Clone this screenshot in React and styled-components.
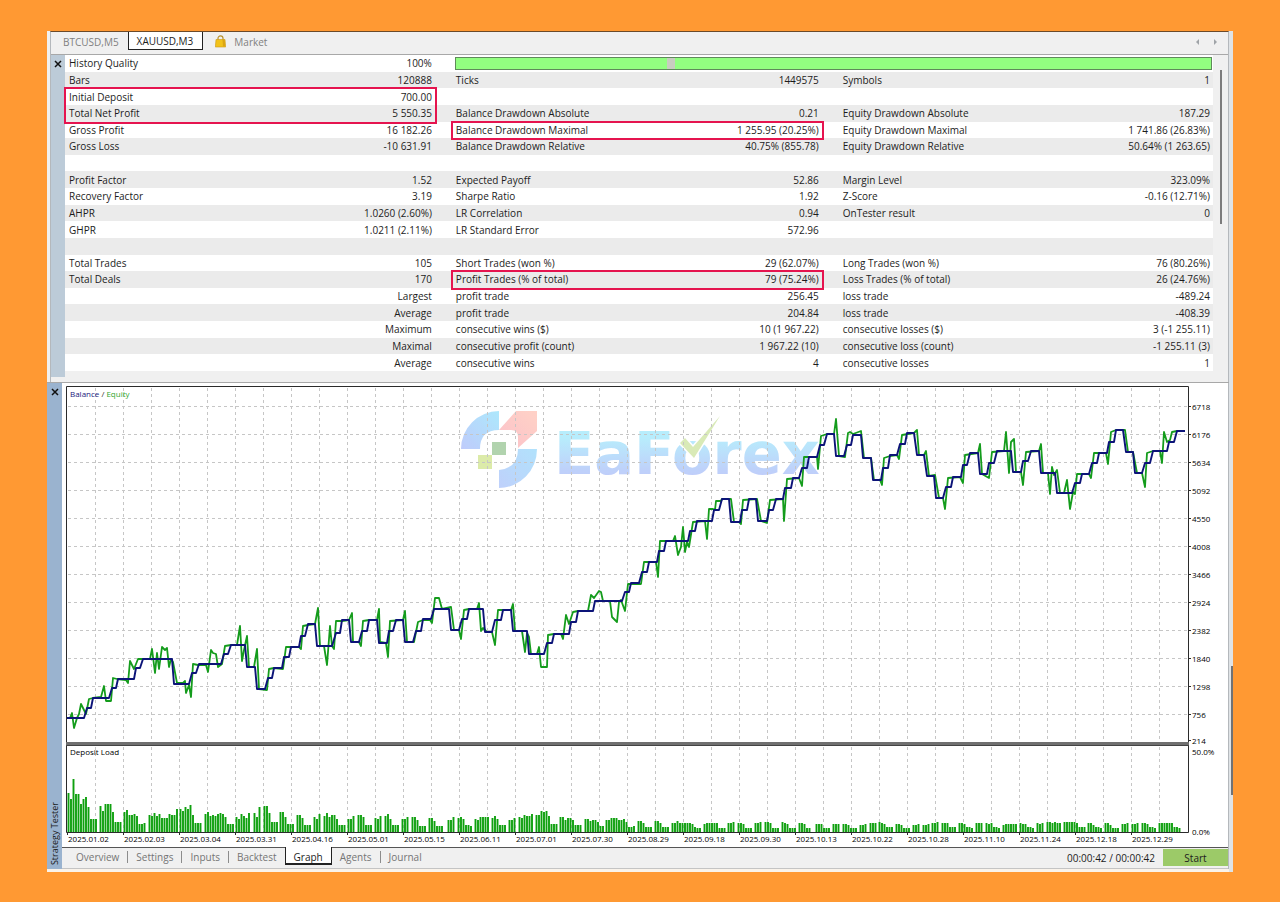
import styled, { createGlobalStyle, css } from 'styled-components'

const GlobalStyle = createGlobalStyle`
  * {
    box-sizing: border-box;
  }
  body {
    margin: 0;
    background: #ff9933;
    color: #1c1c1c;
    font-family: 'Open Sans', 'Noto Sans', sans-serif;
    font-size: 10px;
    line-height: 16px;
  }
  button {
    font: inherit;
    color: inherit;
    margin: 0;
    border: 0;
    cursor: pointer;
  }
`

const Page = styled.div`
  min-height: 100vh;
  padding: 31px 47px 30px;
`

const Window = styled.main`
  display: flex;
  flex-direction: column;
  background: #f0f0f0;
  border-right: 4px solid #dfe3e6;
  position: relative;
`

const TopPane = styled.section`
  margin-left: 3px;
  border-left: 1px solid #b4b8bc;
  border-top: 1px solid #6b4a2a;
  border-right: 1px solid #b4b8bc;
`

const SymbolTabs = styled.nav`
  display: flex;
  align-items: flex-start;
  height: 23px;
  border-bottom: 1px solid #a8a8a8;
`

const SymbolTab = styled.button`
  display: flex;
  align-items: center;
  gap: 8px;
  height: 19px;
  padding: 0 9px 0 12px;
  background: transparent;
  color: #808080;
  ${({ $active }) => $active && css`
    height: 18px;
    padding: 0 9px 0 8px;
    background: #fff;
    color: #1c1c1c;
    border: solid #222;
    border-width: 0 1px 1px;
  `}
`

const TabArrows = styled.div`
  display: flex;
  gap: 13px;
  margin-left: auto;
  padding: 7px 10px 0 0;
`

const StatsBody = styled.div`
  display: flex;
  padding-bottom: 11px;
`

const StatsBar = styled.div`
  width: 14px;
  margin-bottom: -6px;
  background: #bccbd8;
  display: flex;
  justify-content: center;
  padding-top: 1px;
`

const CloseButton = styled.button`
  width: 14px;
  height: 16px;
  padding: 0;
  background: transparent;
  display: flex;
  align-items: center;
  justify-content: center;
`

const StatsArea = styled.div`
  position: relative;
  flex: 1;
  background: #fff;
`

const StatsTable = styled.table`
  width: 100%;
  height: 316px;
  table-layout: fixed;
  border-collapse: collapse;
  tr {
    height: 16px;
  }
  tr:nth-child(even) {
    background: #ebebeb;
  }
`

const Label = styled.td`
  padding: 0 0 0 4px;
  white-space: nowrap;
`

const Value = styled.td`
  padding: 0 ${({ $last }) => $last ? '3px' : '20px'} 0 0;
  text-align: right;
  white-space: nowrap;
`

const QualityCell = styled.td`
  padding: 0 1px 0 3px;
`

const QualityBar = styled.div`
  height: 13px;
  border: 1px solid #5f8a5a;
  background: linear-gradient(90deg, #92ff80 0 28%, #c8ccc0 28% 29%, #92ff80 29%);
`

const Highlight = styled.div`
  position: absolute;
  left: ${({ $group }) => `calc(${$group * 33.7}% - 1px)`};
  top: ${({ $row }) => `calc(${($row * 100) / 19}% - 1px)`};
  width: calc(33.7% - 14px);
  height: ${({ $rows }) => `calc(${($rows * 100) / 19}% + 3px)`};
  border: 2px solid #e5144f;
  pointer-events: none;
`

const StatsScroll = styled.div`
  width: 15px;
  display: flex;
  justify-content: center;
  padding-top: 15px;
`

const ScrollThumb = styled.div`
  width: 2px;
  height: 154px;
  background: #7c7c7c;
`

const TesterPane = styled.section`
  display: flex;
  border-top: 1px solid #a8a8a8;
  border-bottom: 3px solid #faf3ea;
`

const TesterBar = styled.div`
  width: 15px;
  background: #9ab3cf;
  display: flex;
  flex-direction: column;
  justify-content: space-between;
  align-items: center;
  padding: 1px 0 4px;
`

const PaneName = styled.span`
  writing-mode: vertical-rl;
  transform: rotate(180deg);
  font-size: 9px;
  line-height: 15px;
`

const TesterContent = styled.div`
  flex: 1;
  min-width: 0;
  display: flex;
  flex-direction: column;
  border-right: 1px solid #b4b8bc;
`

const Chart = styled.svg`
  display: block;
  width: 100%;
  background: #fff;
  font-size: 8px;
`

const Footer = styled.footer`
  display: flex;
  justify-content: space-between;
  align-items: flex-start;
  height: 22px;
  border-top: 1px solid #555;
  border-bottom: 1px solid #c4c4c4;
`

const PaneTabs = styled.nav`
  display: flex;
  align-items: flex-start;
  padding-left: 6px;
`

const PaneTab = styled.button`
  height: 17px;
  padding: 0 8px;
  background: transparent;
  color: #757575;
  ${({ $active }) => $active && css`
    height: 18px;
    margin-top: -1px;
    padding-top: 2px;
    background: #fff;
    color: #1c1c1c;
    border: solid #222;
    border-width: 0 1px 2px;
  `}
`

const Divider = styled.span`
  width: 1px;
  height: 12px;
  margin-top: 3px;
  background: #8c8c8c;
`

const Controls = styled.div`
  display: flex;
  align-items: center;
  gap: 8px;
  padding-top: 1px;
`

const StartButton = styled.button`
  width: 65px;
  height: 17px;
  padding: 0;
  background: #9cca68;
`

const PageThumb = styled.div`
  position: absolute;
  right: -4px;
  top: 75.5%;
  width: 2px;
  height: 15.4%;
  background: #6f7276;
`

const stats = [
  ['Bars', '120888', 'Ticks', '1449575', 'Symbols', '1'],
  ['Initial Deposit', '700.00', '', '', '', ''],
  ['Total Net Profit', '5 550.35', 'Balance Drawdown Absolute', '0.21', 'Equity Drawdown Absolute', '187.29'],
  ['Gross Profit', '16 182.26', 'Balance Drawdown Maximal', '1 255.95 (20.25%)', 'Equity Drawdown Maximal', '1 741.86 (26.83%)'],
  ['Gross Loss', '-10 631.91', 'Balance Drawdown Relative', '40.75% (855.78)', 'Equity Drawdown Relative', '50.64% (1 263.65)'],
  ['', '', '', '', '', ''],
  ['Profit Factor', '1.52', 'Expected Payoff', '52.86', 'Margin Level', '323.09%'],
  ['Recovery Factor', '3.19', 'Sharpe Ratio', '1.92', 'Z-Score', '-0.16 (12.71%)'],
  ['AHPR', '1.0260 (2.60%)', 'LR Correlation', '0.94', 'OnTester result', '0'],
  ['GHPR', '1.0211 (2.11%)', 'LR Standard Error', '572.96', '', ''],
  ['', '', '', '', '', ''],
  ['Total Trades', '105', 'Short Trades (won %)', '29 (62.07%)', 'Long Trades (won %)', '76 (80.26%)'],
  ['Total Deals', '170', 'Profit Trades (% of total)', '79 (75.24%)', 'Loss Trades (% of total)', '26 (24.76%)'],
  ['', 'Largest', 'profit trade', '256.45', 'loss trade', '-489.24'],
  ['', 'Average', 'profit trade', '204.84', 'loss trade', '-408.39'],
  ['', 'Maximum', 'consecutive wins ($)', '10 (1 967.22)', 'consecutive losses ($)', '3 (-1 255.11)'],
  ['', 'Maximal', 'consecutive profit (count)', '1 967.22 (10)', 'consecutive loss (count)', '-1 255.11 (3)'],
  ['', 'Average', 'consecutive wins', '4', 'consecutive losses', '1'],
]

const levels = [
  ['6718', 410], ['6176', 438], ['5634', 466], ['5092', 494], ['4550', 522], ['4008', 550], ['3466', 578],
  ['2924', 606], ['2382', 634], ['1840', 662], ['1298', 690], ['756', 718], ['214', 744],
]

const dates = [
  '2025.01.02', '2025.02.03', '2025.03.04', '2025.03.31', '2025.04.16', '2025.05.01', '2025.05.15',
  '2025.06.11', '2025.07.01', '2025.07.30', '2025.08.29', '2025.09.18', '2025.09.30', '2025.10.13',
  '2025.10.22', '2025.10.28', '2025.11.10', '2025.11.24', '2025.12.18', '2025.12.29',
]

const balance = `67,718 84,718 87,708 91,708 93,698 109,698 112,688 116,688 118,679 134,679 136,668 140,668
143,659 172,659 174,684 189,684 192,673 196,673 199,664 221,664 224,654 228,654 231,645 245,645 247,667
255,667 257,689 265,689 268,678 272,678 274,668 282,668 284,657 289,657 291,647 299,647 301,636 305,636
308,624 315,624 317,646 332,646 336,633 340,633 342,620 349,620 351,642 359,642 362,631 367,631 369,620
377,620 379,643 387,643 389,631 393,631 396,620 403,620 405,642 413,642 416,631 421,631 423,619 431,619
434,609 449,609 451,630 459,630 462,619 467,619 469,609 483,609 485,632 492,632 495,620 501,620 503,610
511,610 513,631 527,631 529,654 544,654 547,643 552,643 554,634 569,634 571,622 576,622 578,611 593,611
595,601 622,601 625,592 629,592 631,583 639,583 642,572 647,572 649,562 657,562 659,551 664,551 666,541
688,541 690,531 695,531 697,521 712,521 714,510 719,510 722,499 729,499 731,522 740,522 742,510 747,510
749,499 756,499 758,521 767,521 769,510 773,510 776,499 783,499 785,488 791,488 793,478 799,478 802,468
807,468 809,457 817,457 820,445 824,445 827,434 834,434 836,456 844,456 847,445 851,445 853,435 861,435
863,458 871,458 873,480 881,480 883,468 888,468 890,455 897,455 900,444 905,444 907,433 914,433 917,455
924,455 927,476 934,476 936,498 943,498 946,487 951,487 953,477 961,477 963,465 967,465 970,453 978,453
980,474 987,474 989,463 994,463 997,451 1011,451 1013,472 1021,472 1023,461 1028,461 1031,451 1039,451
1041,473 1055,473 1057,493 1072,493 1075,483 1080,483 1082,474 1089,474 1092,463 1097,463 1099,453
1107,453 1109,442 1114,442 1116,430 1123,430 1126,452 1133,452 1135,473 1142,473 1145,463 1150,463
1153,451 1167,451 1169,442 1174,442 1177,431 1185,431`

const equity = `67,718 70,718 72,713 74,728 77,718 79,714 81,704 84,710 86,714 89,699 93,698 101,697 104,686
106,701 111,701 113,678 117,679 126,680 128,683 130,661 134,669 138,659 150,659 152,649 155,673 157,653
159,669 162,647 165,650 167,648 169,667 171,659 173,662 177,683 183,683 185,681 186,693 189,685 191,697
193,664 198,665 206,665 208,672 211,650 213,653 216,654 218,667 222,664 225,646 231,645 237,645 240,626
242,661 244,650 247,636 249,667 254,667 257,649 259,689 267,690 269,669 274,668 283,669 286,647 291,647
299,647 301,649 303,626 308,625 315,624 318,608 320,646 324,646 327,665 330,626 332,646 334,649 336,621
342,621 349,620 352,613 353,642 359,642 361,646 363,621 369,620 377,620 379,609 380,642 386,643 388,657
390,621 403,620 405,611 407,642 414,642 418,622 423,620 430,620 432,623 435,598 439,598 442,609 451,607
454,630 459,630 461,639 464,610 469,609 477,609 479,603 481,631 483,628 487,632 492,632 495,645 498,610
511,610 513,604 515,631 522,631 525,652 527,633 529,637 531,654 537,654 539,647 541,667 547,667 548,635
554,634 561,634 563,639 566,615 569,624 573,612 578,611 588,611 591,595 594,598 599,591 601,592 603,601
610,601 612,617 617,622 619,602 621,600 625,611 628,584 641,584 644,562 656,562 658,577 660,541 673,541
675,536 678,555 681,547 683,527 685,552 687,542 689,547 693,522 705,521 707,539 709,509 713,509 715,510
716,501 721,501 722,499 731,499 734,522 739,522 741,524 743,500 757,499 761,521 767,523 770,500 783,499
784,521 787,479 799,478 802,486 804,457 817,457 818,469 821,436 827,434 834,434 836,419 839,456 845,457
848,433 850,432 853,434 861,431 864,458 871,458 874,480 880,480 882,485 884,458 890,456 897,455 899,459
902,435 914,433 917,430 919,455 924,455 926,451 929,476 935,475 939,498 943,498 945,509 948,478 960,477
963,483 965,455 978,453 980,444 982,474 989,478 992,452 1004,451 1006,432 1009,473 1011,442 1014,439
1016,472 1021,472 1023,485 1026,452 1039,451 1041,444 1043,473 1048,473 1050,494 1052,467 1054,475
1057,470 1060,493 1064,493 1067,480 1070,509 1073,492 1075,494 1077,474 1089,474 1091,478 1094,453
1106,453 1108,464 1111,432 1116,430 1125,430 1128,452 1133,452 1137,473 1142,473 1145,487 1147,453
1153,451 1160,451 1162,463 1164,432 1167,442 1170,440 1172,432 1177,431 1185,431`

// each cluster: x of its first bar, then the bar heights
const loads = [
  [68, 39, 33, 53, 38, 38, 28, 33, 35, 25, 13, 13, 13],
  [100, 26, 21, 28, 28, 28, 20, 10, 10, 10],
  [124, 20, 22, 17, 17, 18, 16, 8, 8, 9],
  [149, 17, 16, 19, 16, 18, 14, 14, 14, 18, 17, 17, 23],
  [180, 23, 21, 25, 23, 27, 17, 9, 9, 9],
  [205, 18, 20, 16, 17, 16, 18, 19, 18, 15, 8, 8, 8],
  [236, 15, 13, 18, 16, 14, 19], [254, 19, 15, 25],
  [264, 26, 26, 19, 10, 10, 10], [280, 20, 20, 15, 8, 8, 8],
  [297, 17, 17, 14, 7, 7, 7], [314, 15, 13, 18],
  [324, 16, 19, 15, 17, 17, 13, 7, 7, 7], [348, 13, 13, 16],
  [358, 17, 17, 15, 7, 7, 7], [375, 14, 13, 16],
  [385, 16, 18, 13, 7, 7, 7], [402, 13, 13, 15],
  [412, 15, 15, 12, 6, 6, 6], [429, 14, 14, 11, 6, 6, 6], [448, 12, 12, 15],
  [458, 14, 15, 13, 7, 7, 6], [475, 13, 12, 15, 15, 15, 15],
  [492, 14, 16, 13, 7, 7, 7], [509, 12, 12, 14],
  [519, 15, 14, 17, 16, 16, 18], [536, 17, 17, 21, 20, 21, 16, 8, 8, 8],
  [560, 15, 15, 12, 14, 14, 12, 7, 7, 7], [585, 13, 13, 11, 12, 12, 10, 6, 6],
  [606, 12, 12, 14, 14, 14, 12, 12, 13, 10, 5, 5, 6],
  [638, 11, 11, 9, 5, 5, 5], [655, 11, 11, 9, 5, 5, 5],
  [672, 9, 9, 11, 9, 9, 9, 9, 9, 8, 5, 4, 4], [704, 8, 9, 9, 9, 9, 9, 4, 4, 4],
  [728, 9, 9, 10], [738, 9, 9, 8, 4, 4, 4], [755, 9, 9, 10],
  [765, 10, 10, 9, 4, 4, 4], [782, 10, 9, 8, 4, 4, 4],
  [799, 9, 9, 8, 4, 4], [816, 8, 8, 8, 4, 4, 4], [833, 8, 8, 8],
  [843, 8, 8, 7, 4, 4, 4], [860, 7, 7, 8], [870, 9, 9, 9],
  [879, 10, 9, 8, 5, 5, 5], [896, 8, 8, 7, 4, 4, 4], [913, 7, 7, 8],
  [923, 7, 7, 8], [932, 9, 9, 10], [942, 9, 9, 9, 5, 5, 5],
  [959, 9, 9, 8, 5, 5, 4], [976, 9, 9, 9], [986, 9, 8, 9, 5, 5, 4],
  [1003, 7, 8, 8, 8, 8, 8], [1020, 9, 8, 8, 5, 5, 4], [1037, 9, 8, 9],
  [1047, 10, 10, 9, 10, 9, 9], [1064, 10, 10, 10, 10, 10, 9, 5, 5, 5],
  [1088, 9, 9, 7, 5, 5, 4], [1105, 9, 9, 7, 4, 4, 4], [1122, 8, 8, 9],
  [1132, 8, 8, 9], [1142, 9, 9, 8, 5, 5, 4], [1159, 9, 9, 9, 9, 9, 9, 5, 5, 4],
]

const BAR_STEP = 2.5
const gridX = Array.from({ length: 39 }, (_, i) => 95.5 + i * 28)
const gridY = Array.from({ length: 12 }, (_, i) => 406.5 + i * 28)

const loadPath = loads
  .flatMap(([x, ...heights]) => heights.map((h, i) => `M${x + 0.5 + i * BAR_STEP} 832v${-h}`))
  .join('')

function CloseIcon() {
  return (
    <svg width="8" height="8" viewBox="0 0 8 8" fill="none" stroke="#111" strokeWidth="1.5">
      <path d="M1 1l6 6M7 1L1 7" />
    </svg>
  )
}

function BagIcon() {
  return (
    <svg width="11" height="13" viewBox="0 0 11 13">
      <path d="M3 5.5V3.2a2.5 2.3 0 0 1 5 0v2.3" fill="none" stroke="#b8902c" strokeWidth="1.2" />
      <path d="M1 4.5h9l.7 7.5H.3z" fill="#f2c21a" stroke="#c9981a" strokeWidth=".6" />
      <path d="M7.5 4.8h2.2l.5 6.8H8z" fill="#dba514" />
    </svg>
  )
}

function Arrow({ flip }) {
  return (
    <svg width="5" height="6" viewBox="0 0 5 6" fill="#a0a4a8">
      <path d={flip ? 'M1 0l3 3-3 3z' : 'M4 0L1 3l3 3z'} />
    </svg>
  )
}

function Watermark() {
  return (
    <g opacity=".9">
      <path d="M461 449A38 38 0 0 1 499 411V430Q480 430 480 449Z" fill="url(#arcTop)" />
      <path d="M537 449A38 39 0 0 1 499 488V470Q518 468 518 449Z" fill="url(#arcBottom)" />
      <path d="M516 411H537V431L518 448V437Q518 430 511 430H499Z" fill="url(#arrow)" />
      <rect x="492" y="442" width="14" height="13" fill="#a9cfa6" />
      <rect x="478" y="455" width="14" height="14" fill="#d9e9a0" />
      <text x="554" y="474" fontSize="59" fontWeight="700" fontFamily="DejaVu Sans" fill="url(#word)">EaForex</text>
      <path d="M680 443L685 438L693 447L720 416L694 458Z" fill="#d5e8b0" stroke="#fff" strokeWidth="3" paintOrder="stroke" strokeLinejoin="round" />
    </g>
  )
}

function TradeChart() {
  return (
    <Chart viewBox="62 383 1166 464" role="img" aria-label="Balance / Equity">
      <defs>
        <linearGradient id="word" x1="0" y1="0" x2="0" y2="1">
          <stop offset=".25" stopColor="#b0ecfc" />
          <stop offset=".8" stopColor="#b9c9fa" />
        </linearGradient>
        <linearGradient id="arcTop" x1="1" y1="0" x2="0" y2="1">
          <stop offset="0" stopColor="#a4e6fc" />
          <stop offset="1" stopColor="#b8c6fb" />
        </linearGradient>
        <linearGradient id="arcBottom" x1="1" y1="0" x2="0" y2="1">
          <stop offset="0" stopColor="#a9dffc" />
          <stop offset="1" stopColor="#b8ccfb" />
        </linearGradient>
        <linearGradient id="arrow" x1="1" y1="0" x2="0" y2="1">
          <stop offset="0" stopColor="#ffcdc0" />
          <stop offset="1" stopColor="#fbbcc6" />
        </linearGradient>
      </defs>

      <Watermark />

      <g stroke="#c6c6c6" strokeDasharray="3 3">
        {gridX.map((x) => <path key={x} d={`M${x} 388V742M${x} 747V832`} />)}
        {gridY.map((y) => <path key={y} d={`M68 ${y}H1188`} />)}
      </g>

      <path d={loadPath} stroke="#0fa00f" strokeWidth="1.9" />
      <polyline points={equity} fill="none" stroke="#149c1c" strokeWidth="1.8" strokeLinejoin="round" />
      <polyline points={balance} fill="none" stroke="#0c1478" strokeWidth="1.9" strokeLinejoin="round" />

      <path d="M66.5 742V386.5H1188.5V742M66.5 745V832.5H1188.5V745" fill="none" stroke="#2b2b2b" />
      <rect x="66" y="742" width="1123" height="4" fill="#707070" />
      <path d="M66 745.5H1189" stroke="#444" />

      <text x="70" y="397">
        <tspan fill="#22207c">Balance</tspan> <tspan fill="#333">/</tspan> <tspan fill="#2fa52f">Equity</tspan>
      </text>
      <text x="70" y="755">Deposit Load</text>

      {levels.map(([level, y]) => (
        <g key={level}>
          <path d={`M1188 ${y - 3.5}h3`} stroke="#2b2b2b" />
          <text x="1192" y={y}>{level}</text>
        </g>
      ))}
      <text x="1192" y="755">50.0%</text>
      <text x="1192" y="835">0.0%</text>

      {dates.map((date, i) => (
        <g key={date}>
          <path d={`M${67.5 + i * 56} 832v3`} stroke="#2b2b2b" />
          <text x={68 + i * 56} y="842">{date}</text>
        </g>
      ))}
    </Chart>
  )
}

function StatsReport() {
  return (
    <StatsArea>
      <StatsTable aria-label="Backtest">
        <colgroup>
          <col width="17.7%" />
          <col width="16%" />
          <col width="17.7%" />
          <col width="16%" />
          <col width="17.6%" />
          <col width="15%" />
        </colgroup>
        <tbody>
          <tr>
            <Label>History Quality</Label>
            <Value>100%</Value>
            <QualityCell colSpan={4}>
              <QualityBar role="progressbar" aria-label="History Quality" aria-valuenow={100} />
            </QualityCell>
          </tr>
          {stats.map((row, i) => (
            <tr key={i}>
              {row.map((text, col) => (
                col % 2 === 0
                  ? <Label key={col}>{text}</Label>
                  : <Value key={col} $last={col === 5}>{text}</Value>
              ))}
            </tr>
          ))}
        </tbody>
      </StatsTable>
      <Highlight $group={0} $row={2} $rows={2} />
      <Highlight $group={1} $row={4} $rows={1} />
      <Highlight $group={1} $row={13} $rows={1} />
    </StatsArea>
  )
}

export default function App() {
  return (
    <>
      <GlobalStyle />
      <Page>
        <Window>
          <TopPane>
            <SymbolTabs>
              <SymbolTab>BTCUSD,M5</SymbolTab>
              <SymbolTab $active>XAUUSD,M3</SymbolTab>
              <SymbolTab><BagIcon />Market</SymbolTab>
              <TabArrows>
                <Arrow />
                <Arrow flip />
              </TabArrows>
            </SymbolTabs>
            <StatsBody>
              <StatsBar>
                <CloseButton aria-label="Close"><CloseIcon /></CloseButton>
              </StatsBar>
              <StatsReport />
              <StatsScroll><ScrollThumb /></StatsScroll>
            </StatsBody>
          </TopPane>

          <TesterPane>
            <TesterBar>
              <CloseButton aria-label="Close"><CloseIcon /></CloseButton>
              <PaneName>Strategy Tester</PaneName>
            </TesterBar>
            <TesterContent>
              <TradeChart />
              <Footer>
                <PaneTabs>
                  <PaneTab>Overview</PaneTab>
                  <Divider />
                  <PaneTab>Settings</PaneTab>
                  <Divider />
                  <PaneTab>Inputs</PaneTab>
                  <Divider />
                  <PaneTab>Backtest</PaneTab>
                  <PaneTab $active>Graph</PaneTab>
                  <PaneTab>Agents</PaneTab>
                  <Divider />
                  <PaneTab>Journal</PaneTab>
                </PaneTabs>
                <Controls>
                  <span>00:00:42 / 00:00:42</span>
                  <StartButton>Start</StartButton>
                </Controls>
              </Footer>
            </TesterContent>
          </TesterPane>
          <PageThumb />
        </Window>
      </Page>
    </>
  )
}
